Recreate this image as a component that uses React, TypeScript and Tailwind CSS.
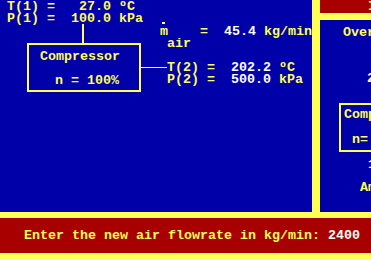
import React from "react"

const Y = "text-[#ffff55]"
const W = "text-white"

function Diagram() {
    return (
        <div className="relative w-[312px] h-full">
            {/* inlet conditions */}
            <div className={`absolute left-[7px] top-[1px] ${Y}`}>
                <div>T(1) =   27.0 ºC</div>
                <div>P(1) =  100.0 kPa</div>
            </div>
            <div className="absolute left-[82px] top-[24px] w-[2px] h-[19px] bg-[#ffff55]" />

            {/* compressor box */}
            <div className="absolute left-[27px] top-[43px] w-[114px] h-[49px] border-2 border-[#ffff55] pl-[11px] pt-[6px]">
                <div className={Y}>Compressor</div>
                <div className={`${Y} mt-[12px] pl-[15px]`}>n = 100%</div>
            </div>
            <div className="absolute left-[141px] top-[67px] w-[26px] h-[1px] bg-[#ffff55]" />

            {/* mass flow */}
            <div className="absolute left-[162px] top-[22px] w-[3px] h-[2px] bg-[#ffff55]" />
            <div className="absolute left-[160px] top-[26px]">
                <span className={Y}>m    =  </span>
                <span className={W}>45.4</span>
                <span className={Y}> kg/min</span>
            </div>
            <div className={`absolute left-[167px] top-[38px] ${Y}`}>air</div>

            {/* outlet conditions */}
            <div className="absolute left-[167px] top-[62px]">
                <div><span className={Y}>T(2) =  </span><span className={W}>202.2</span><span className={Y}> ºC</span></div>
                <div><span className={Y}>P(2) =  </span><span className={W}>500.0</span><span className={Y}> kPa</span></div>
            </div>
        </div>
    )
}

function SidePanel() {
    return (
        <div className="flex-1 flex flex-col overflow-hidden min-w-0">
            <div className={`h-[13px] bg-[#a80000] pl-[48px] pt-[1px] ${Y}`}>INFORMATION</div>
            <div className="h-[7px] bg-[#ffff55]" />
            <div className="flex flex-col">
                <div className={`mt-[7px] pl-[23px] ${Y}`}>Overall</div>
                <div className={`mt-[34px] pl-[47px] ${W}`}>2400.0</div>
                <div className="mt-[18px] ml-[19px] h-[49px] w-[120px] border-2 border-[#ffff55] pl-[3px] pt-[4px]">
                    <div className={Y}>Compressor</div>
                    <div className={`mt-[13px] pl-[8px] ${Y}`}>n= 100%</div>
                </div>
                <div className={`mt-[7px] pl-[48px] ${W}`}>100.0</div>
                <div className={`mt-[11px] pl-[40px] ${Y}`}>Ambient</div>
            </div>
        </div>
    )
}

export default function App() {
    return (
        <div className="w-[371px] h-[260px] overflow-hidden bg-[#0000a8] flex flex-col font-['Liberation_Mono',monospace] font-bold text-[13.33px] leading-[12px] whitespace-pre">
            <div className="h-[212px] flex">
                <Diagram />
                <div className="w-[8px] bg-[#ffff55]" />
                <SidePanel />
            </div>
            <div className="h-[6px] bg-[#ffff55]" />
            <div className="h-[35px] bg-[#a80000] flex items-center pl-[24px]">
                <span className={Y}>Enter the new air flowrate in kg/min: </span>
                <span className={W}>2400</span>
            </div>
            <div className="h-[7px] bg-[#ffff55]" />
        </div>
    )
}
